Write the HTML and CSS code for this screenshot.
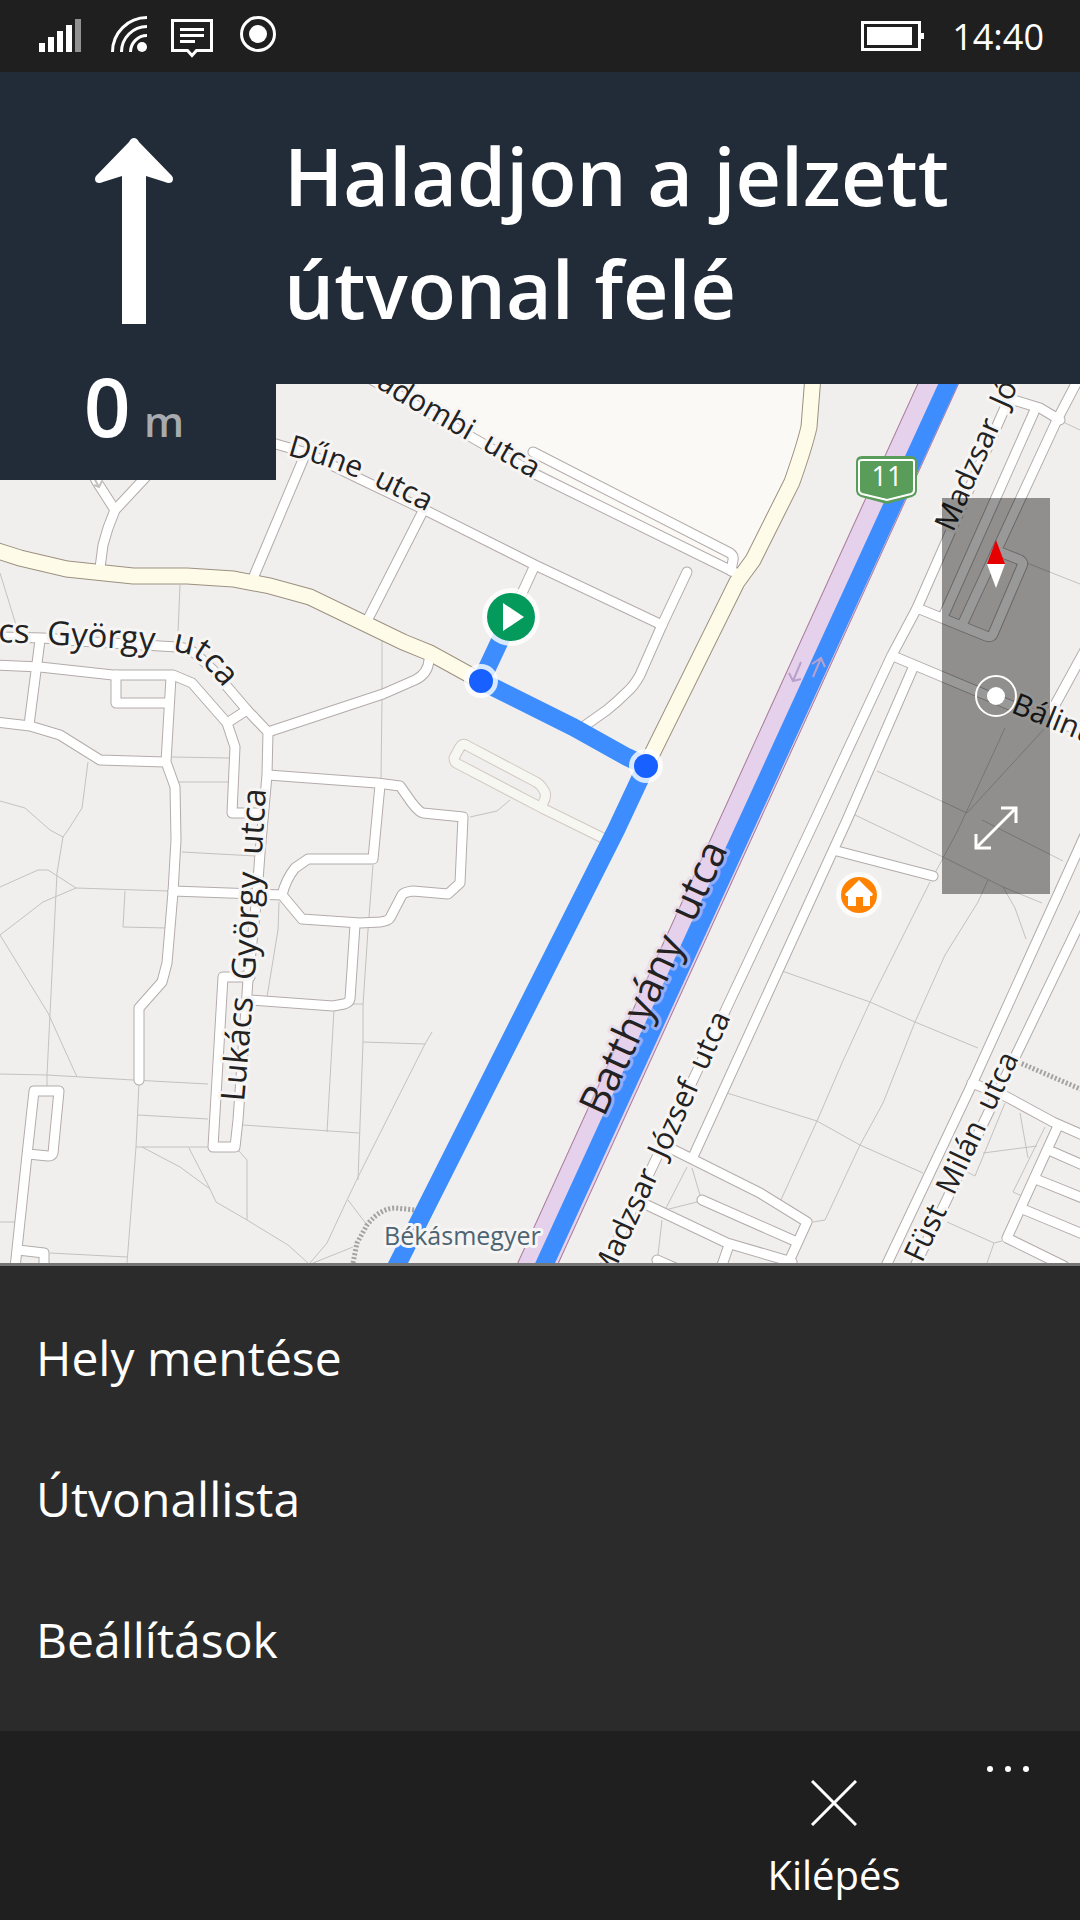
FILE: index.html
```html
<!DOCTYPE html>
<html lang="hu">
<head>
    <meta charset="UTF-8">
    <meta name="viewport" content="width=device-width, initial-scale=1.0">
    <title>Navigáció</title>
    <link rel="stylesheet" href="styles.css">
</head>

<body>
<header class="status-bar">
    <svg class="status-icons" width="240" height="72" viewBox="36 0 240 72" aria-hidden="true">
        <g fill="#fff">
            <path d="M39 43h6v9h-6zM48 37h6v15h-6zM57 31h6v21h-6zM66 25h6v27h-6z"/>
            <path fill="#919191" d="M75 19h6v33h-6z"/>
            <circle cx="142" cy="47" r="5"/>
            <path d="M180 28h24v3h-24zM180 34h24v3h-24zM180 40h15v3h-15z"/>
            <circle cx="258" cy="34" r="9"/>
        </g>
        <g fill="none" stroke="#fff" stroke-width="3">
            <path d="M112.500 52A34.500 34.500 0 0 1 147 17.500M121.500 52A25.500 25.500 0 0 1 147 26.500M130.500 52A16.500 16.500 0 0 1 147 35.500"/>
            <path d="M172.500 20.500h39v30h-15l-4.500 5-4.500-5h-15z"/>
            <circle cx="258" cy="34" r="16.500"/>
        </g>
    </svg>
    <svg class="battery" width="63" height="30" viewBox="0 0 63 30" aria-hidden="true">
        <path fill="none" stroke="#fff" stroke-width="3" d="M1.500 1.500h57v27h-57z"/>
        <path fill="#fff" d="M6 6h45v18H6zM60 12h3v6h-3z"/>
    </svg>
    <time class="clock">14:40</time>
</header>

<section class="banner">
    <div class="maneuver">
        <svg width="78" height="186" viewBox="0 0 78 186" aria-hidden="true">
            <path fill="#fff" d="M39 0q3 0 5 4l33 34q2 3 0 6-3 2-7 0L51 38v148H27V38L8 44q-4 2-7 0-2-3 0-6L34 4q2-4 5-4z"/>
        </svg>
        <p class="distance">0 <span class="unit">m</span></p>
    </div>
    <h1 class="instruction">Haladjon a jelzett útvonal felé</h1>
</section>

<main class="map">
    <svg class="map-canvas" viewBox="0 384 1080 879" preserveAspectRatio="xMidYMin slice" role="img" aria-label="Térkép">
        <defs>
            <g id="roads">
                <path d="M100 568L103 545L108 528L115 510L97 482L90 468M115 510L143 480L154 468"/>
                <path d="M262 440L307 453L360 479L423 509L535 565L662 625M305 455L254 576M422 513L369 617M535 565L511 617"/>
                <path d="M687 572L662 625L640 675Q634 686 627 692Q617 702 607 710L583 727"/>
                <path d="M355 370L473 438L537 475L740 575M533 452L730 553Q734 556 733 560L731 571"/>
                <path d="M-5 637L43 638L93 642L177 647Q190 648 197 655L213 670L247 710L268 732L267 775L260 853L257 895L248 980L238 1120L235 1147H213L223 977H250"/>
                <path d="M-5 665L40 667L113 675H173L192 683L227 723L235 747L232 813H262M227 723L247 710M40 640L29 725"/>
                <path d="M-5 722L30 726L60 735L100 760L165 762M171 677L166 762L175 787L176 840L173 892L167 963L162 982L139 1008V1080M116 675V703H167"/>
                <path d="M268 732L383 694L415 680Q428 674 429 660"/>
                <path d="M268 775L377 783L400 786L412 803Q419 812 423 813L463 817L460 883L448 894L413 891Q404 892 402 895L390 918Q388 921 380 922L360 923L302 919L282 895L173 891"/>
                <path d="M380 785L373 859H308L295 868Q286 879 282 895M355 925L350 999Q349 1003 344 1004L333 1006L250 1000"/>
                <path d="M15 1268L27 1155L34 1091H59L53 1153Q52 1156 48 1156L28 1154M18 1250L44 1253V1268"/>
                <path d="M1007 403L917 608L892 655L815 820L727 1007L657 1157L604 1268M1010 399L1040 408L1060 420"/>
                <path d="M1034 412L943 617M1080 376L1057 420L963 623M1000 552L1020 560Q1024 562 1022 566L993 634Q991 638 986 636L917 608"/>
                <path d="M893 656L1017 708L1085 732M913 668L847 820L693 1157M837 851L933 876M1085 650L1050 714"/>
                <path d="M1085 835L973 1082L885 1268M1085 912L1017 1053L914 1268"/>
                <path d="M972 1083L1007 1097L1053 1122L1085 1136M1057 1128L1007 1238L1064 1266M1053 1152L1085 1166M1038 1180L1085 1199M1025 1210L1085 1235"/>
                <path d="M670 1148L760 1193L807 1222L786 1268M647 1205L727 1243L792 1262M702 1200L797 1242M729 1245L721 1268M657 1260L680 1270"/>
            </g>
            <g id="main-roads">
                <path d="M-5 550L20 558L67 569L133 576L187 576L233 579L270 586L310 597L403 642L430 653L481 681"/>
                <path d="M646 766L737 582L753 560L792 482Q805 445 809 427L813 376"/>
            </g>
            <g id="service-road">
                <path d="M543 803Q548 795 543 789Q540 784 536 782L466 745Q462 743 460 747L454 758Q454 761 456 763L542 808L607 840"/>
            </g>
            <path id="highway" d="M534 1272L944 371"/>
            <path id="label-dombi" d="M326 356L403 404L466 440L533 479"/>
            <path id="label-dune" d="M287 455L328 467L360 479L375 486L450 523"/>
            <path id="label-gyorgy" d="M-150 635L0 642L43 644L177 652Q193 654 203 664L224 688"/>
            <path id="label-lukacs" d="M244 1102L255 976L260 880L268 760"/>
            <path id="label-batthyany" d="M604 1118L744 815"/>
            <path id="label-madzsar" d="M953 533L1028 363"/>
            <path id="label-jozsef" d="M595 1314L731 1017"/>
            <path id="label-fust" d="M906 1298L1019 1058"/>
            <path id="label-balint" d="M1010 712L1130 761"/>
        </defs>

        <path class="park" d="M350 370L735 571L753 555L790 480L808 427L812 370z"/>

        <g class="parcels">
            <path d="M0 573L17 628M180 585L178 633M382 640V690M382 698L381 780M172 757L230 758M177 782H228"/>
            <path d="M88 762L82 808L68 830L63 837L57 873L53 953L47 1075V1088M0 801L25 808L50 830L63 837"/>
            <path d="M0 887L38 870H48L76 888L168 891M76 888L43 902L0 935L48 1013L77 1077M125 891L123 927L167 928"/>
            <path d="M0 1074L47 1075L133 1080L208 1084M139 1083L136 1147L127 1263M138 1115L208 1119M136 1147H208"/>
            <path d="M142 1147L180 1167L210 1189L216 1202L247 1220L288 1245L308 1263M189 1148L210 1189M238 1150L247 1160V1220"/>
            <path d="M182 852L255 856M279 902L278 930L267 997M373 865L368 930L363 1005V1042L358 1180M334 1010L327 1132M243 1125L359 1133M349 1004H363"/>
            <path d="M363 1042L425 1044M432 1032L425 1044L360 1173L347 1200L327 1243L310 1263M348 1200L367 1225M313 1263L353 1247M50 1253L127 1257M0 1222H15M470 817L497 811L510 800"/>
            <path d="M1063 422L1080 430M1027 563L1080 584M877 771L967 813M982 820L1063 861M855 815L943 857L1003 887L1042 903"/>
            <path d="M1005 728L958 830L935 873M1045 728L967 813M930 882L870 1002L842 1063L817 1121L780 1202"/>
            <path d="M988 880L978 902L945 955L915 1022L883 1103L860 1145L825 1220L813 1222M1003 887L1015 908L1026 939"/>
            <path d="M782 971L870 1002L915 1022L978 1048M727 1093L817 1121L860 1145L923 1173"/>
            <path d="M947 1222L994 1243L1002 1241M994 1243L987 1263M1005 1103L975 1176L967 1172M1020 1113L1028 1158M983 1153L1037 1146M1045 1127L1013 1192L1022 1196"/>
            <path d="M687 1167L665 1210L697 1202M692 1168L700 1195M662 1220L658 1255"/>
        </g>

        <g class="railway">
            <path d="M353 1263L357 1243L367 1225Q380 1208 396 1208L415 1210"/>
            <path d="M1018 1062L1085 1091"/>
        </g>

        <use class="service-casing" href="#service-road"/>
        <use class="service-fill" href="#service-road"/>
        <use class="road-casing" href="#roads"/>
        <use class="main-casing" href="#main-roads"/>
        <use class="road-fill" href="#roads"/>
        <use class="main-fill" href="#main-roads"/>
        <use class="highway-casing" href="#highway"/>
        <use class="highway-fill" href="#highway"/>

        <g class="route">
            <path d="M511 617L481 681L573 727L627 757L646 766L616 830L394 1271"/>
            <path d="M541 1272L954 371"/>
        </g>

        <g class="direction">
            <path d="M801 662L793 681M789 673L793 681L801 679"/>
            <path d="M813 677L821 658M812 664L821 658L825 667"/>
            <path class="direction-minor" d="M94 478L99 487M94 485L99 487L102 481"/>
        </g>

        <g class="labels">
            <text text-anchor="end"><textPath href="#label-dombi" startOffset="100%">adombi&nbsp;&nbsp;utca</textPath></text>
            <text><textPath href="#label-dune">Dűne&nbsp;&nbsp;utca</textPath></text>
            <text class="label-large" text-anchor="end"><textPath href="#label-gyorgy" startOffset="100%">Lukács&nbsp;&nbsp;György&nbsp;&nbsp;utca</textPath></text>
            <text class="label-large"><textPath href="#label-lukacs">Lukács&nbsp;&nbsp;György&nbsp;&nbsp;utca</textPath></text>
            <text class="label-highway"><textPath href="#label-batthyany">Batthyány&nbsp;&nbsp;utca</textPath></text>
            <text><textPath href="#label-madzsar">Madzsar&nbsp;&nbsp;Jó</textPath></text>
            <text text-anchor="end"><textPath href="#label-jozsef" startOffset="100%">Madzsar&nbsp;&nbsp;József&nbsp;&nbsp;utca</textPath></text>
            <text text-anchor="end"><textPath href="#label-fust" startOffset="100%">Füst&nbsp;&nbsp;Milán&nbsp;&nbsp;utca</textPath></text>
            <text><textPath href="#label-balint">Bálint</textPath></text>
            <text class="label-station" x="384" y="1245">Békásmegyer</text>
        </g>

        <!-- road number shield -->
        <path fill="#5a9c59" d="M862 456h49q6 0 6 6v28q0 5-5 7l-25 7-26-7q-5-2-5-7v-28q0-6 6-6z"/>
        <path fill="none" stroke="#fff" stroke-width="2" d="M862 460h50q2 0 2 2v28q0 3-3 4l-24 6-25-6q-3-1-3-4v-28q0-2 3-2z"/>
        <text class="shield-number" x="887" y="486" text-anchor="middle">11</text>

        <g class="markers">
            <circle class="halo" cx="481" cy="681" r="17"/>
            <circle cx="481" cy="681" r="12" fill="#1860ff"/>
            <circle class="halo" cx="646" cy="766" r="17"/>
            <circle cx="646" cy="766" r="12" fill="#1860ff"/>
            <circle class="halo" cx="511" cy="617" r="29"/>
            <circle cx="511" cy="617" r="24" fill="#049a5b"/>
            <path fill="#fff" d="M503 603v28l21-14z"/>
            <circle class="halo" cx="859" cy="895" r="23"/>
            <circle cx="859" cy="895" r="18" fill="#ff8200"/>
            <path fill="#fff" d="M859 880l14 14-1 2h-2v10h-7v-9h-7v9h-8v-10h-2l-1-2z"/>
        </g>
    </svg>

    <div class="map-controls">
        <button type="button" aria-label="Észak felé">
            <svg width="48" height="60" viewBox="0 0 48 60"><path fill="#e60000" d="M24 6l9 24H15z"/><path fill="#fff" d="M15 30h18l-9 24z"/></svg>
        </button>
        <button type="button" aria-label="Saját hely">
            <svg width="48" height="48" viewBox="0 0 48 48"><circle cx="24" cy="24" r="20" fill="none" stroke="#fff" stroke-width="2"/><circle cx="24" cy="24" r="9" fill="#fff"/></svg>
        </button>
        <button type="button" aria-label="Teljes útvonal">
            <svg width="48" height="48" viewBox="0 0 48 48" fill="none" stroke="#fff" stroke-width="3"><path d="M4 44L44 4M29 4h15v15M4 30v14h15"/></svg>
        </button>
    </div>
</main>

<nav class="menu">
    <button type="button">Hely mentése</button>
    <button type="button">Útvonallista</button>
    <button type="button">Beállítások</button>
</nav>

<footer class="app-bar">
    <button type="button" class="exit">
        <svg width="46" height="46" viewBox="0 0 46 46" stroke="#fff" stroke-width="3" aria-hidden="true"><path d="M1 1l44 44M45 1L1 45"/></svg>
        Kilépés
    </button>
    <button type="button" class="more" aria-label="Továbbiak">
        <svg width="42" height="6" viewBox="0 0 42 6" fill="#fff"><circle cx="3" cy="3" r="3"/><circle cx="21" cy="3" r="3"/><circle cx="39" cy="3" r="3"/></svg>
    </button>
</footer>
</body>

</html>
```
FILE: styles.css
```css
* {
    box-sizing: border-box;
}

body {
    display: flex;
    flex-direction: column;
    min-height: 100vh;
    margin: 0;
    background: #1f1f1f;
    color: #fff;
    font-family: "Open Sans", "Noto Sans", sans-serif;
}

button {
    padding: 0;
    border: 0;
    background: none;
    color: inherit;
    font: inherit;
    cursor: pointer;
}

svg {
    display: block;
}

.status-bar {
    display: flex;
    align-items: center;
    height: 72px;
    padding: 0 36px;
    background: #1f1f1f;
}

.battery {
    margin-left: auto;
}

.clock {
    margin-left: 28px;
    font-size: 36px;
}

.banner {
    position: relative;
    z-index: 1;
    display: flex;
    background: #222c38;
}

/* hangs over the top left corner of the map */
.maneuver {
    display: flex;
    flex-direction: column;
    align-items: center;
    flex: none;
    width: 276px;
    height: 408px;
    margin-bottom: -96px;
    padding: 66px 8px 0 0;
    background: #222c38;
}

.distance {
    margin: 25px 0 0;
    font-size: 82px;
    font-weight: 600;
    line-height: 112px;
}

.unit {
    margin-left: -8px;
    color: #a7abaf;
    font-size: 42px;
}

.instruction {
    margin: 0;
    padding: 47px 24px 39px 8px;
    font-size: 79px;
    font-weight: 600;
    line-height: 113px;
}

.map {
    position: relative;
    flex: 1;
    min-height: 600px;
    border-bottom: 3px solid #757575;
    background: #f0efed;
}

.map-canvas {
    position: absolute;
    width: 100%;
    height: 100%;
}

.park {
    fill: #fbf9f5;
}

.parcels {
    fill: none;
    stroke: #c4c2c0;
    stroke-width: 1;
}

.railway {
    fill: none;
    stroke: #a5a3a1;
    stroke-width: 5;
    stroke-dasharray: 2 2;
}

.road-casing,
.road-fill,
.service-casing,
.service-fill {
    fill: none;
    stroke: #b4abab;
    stroke-width: 11;
    stroke-linecap: round;
    stroke-linejoin: round;
}

.road-fill {
    stroke: #fff;
    stroke-width: 9;
}

.service-casing {
    stroke: #d3c8c3;
}

.service-fill {
    stroke: #f6f7f1;
    stroke-width: 9;
}

.main-casing,
.main-fill {
    fill: none;
    stroke: #9c9080;
    stroke-width: 17;
}

.main-fill {
    stroke: #fffbe9;
    stroke-width: 15;
}

.highway-casing {
    stroke: #a8799a;
    stroke-width: 38;
}

.highway-fill {
    stroke: #e5d1eb;
    stroke-width: 36;
}

.route {
    fill: none;
    stroke: #3d8dff;
    stroke-width: 18;
}

.direction {
    fill: none;
    stroke: #b8a0cc;
    stroke-width: 2;
}

.direction-minor {
    stroke: #c4c2c0;
}

.labels {
    fill: #222;
    stroke: #f6f5f4;
    stroke-width: 6;
    stroke-linejoin: round;
    paint-order: stroke;
    font-size: 30px;
}

.label-large {
    font-size: 33px;
}

.label-highway {
    stroke: #e5d1eb;
    stroke-opacity: 0.5;
    font-size: 41px;
}

.label-station {
    fill: #4d6573;
    font-size: 25px;
}

.shield-number {
    fill: #fff;
    font-size: 27px;
}

.halo {
    fill: #fff;
    fill-opacity: 0.8;
}

.map-controls {
    position: absolute;
    top: 114px;
    right: 30px;
    display: flex;
    flex-direction: column;
    width: 108px;
    background: rgba(0, 0, 0, 0.4);
}

.map-controls button {
    display: flex;
    align-items: center;
    justify-content: center;
    height: 132px;
}

.menu {
    display: flex;
    flex-direction: column;
    padding: 21px 0;
    background: #2b2b2b;
}

.menu button {
    height: 141px;
    padding: 0 36px;
    font-size: 48px;
    text-align: left;
}

.app-bar {
    display: flex;
    justify-content: flex-end;
    height: 189px;
    background: #1f1f1f;
}

.exit {
    display: flex;
    flex-direction: column;
    align-items: center;
    width: 204px;
    padding-top: 49px;
    font-size: 40px;
    line-height: 54px;
}

.exit svg {
    margin-bottom: 22px;
}

.more {
    display: flex;
    justify-content: center;
    width: 144px;
    padding-top: 35px;
}
```
